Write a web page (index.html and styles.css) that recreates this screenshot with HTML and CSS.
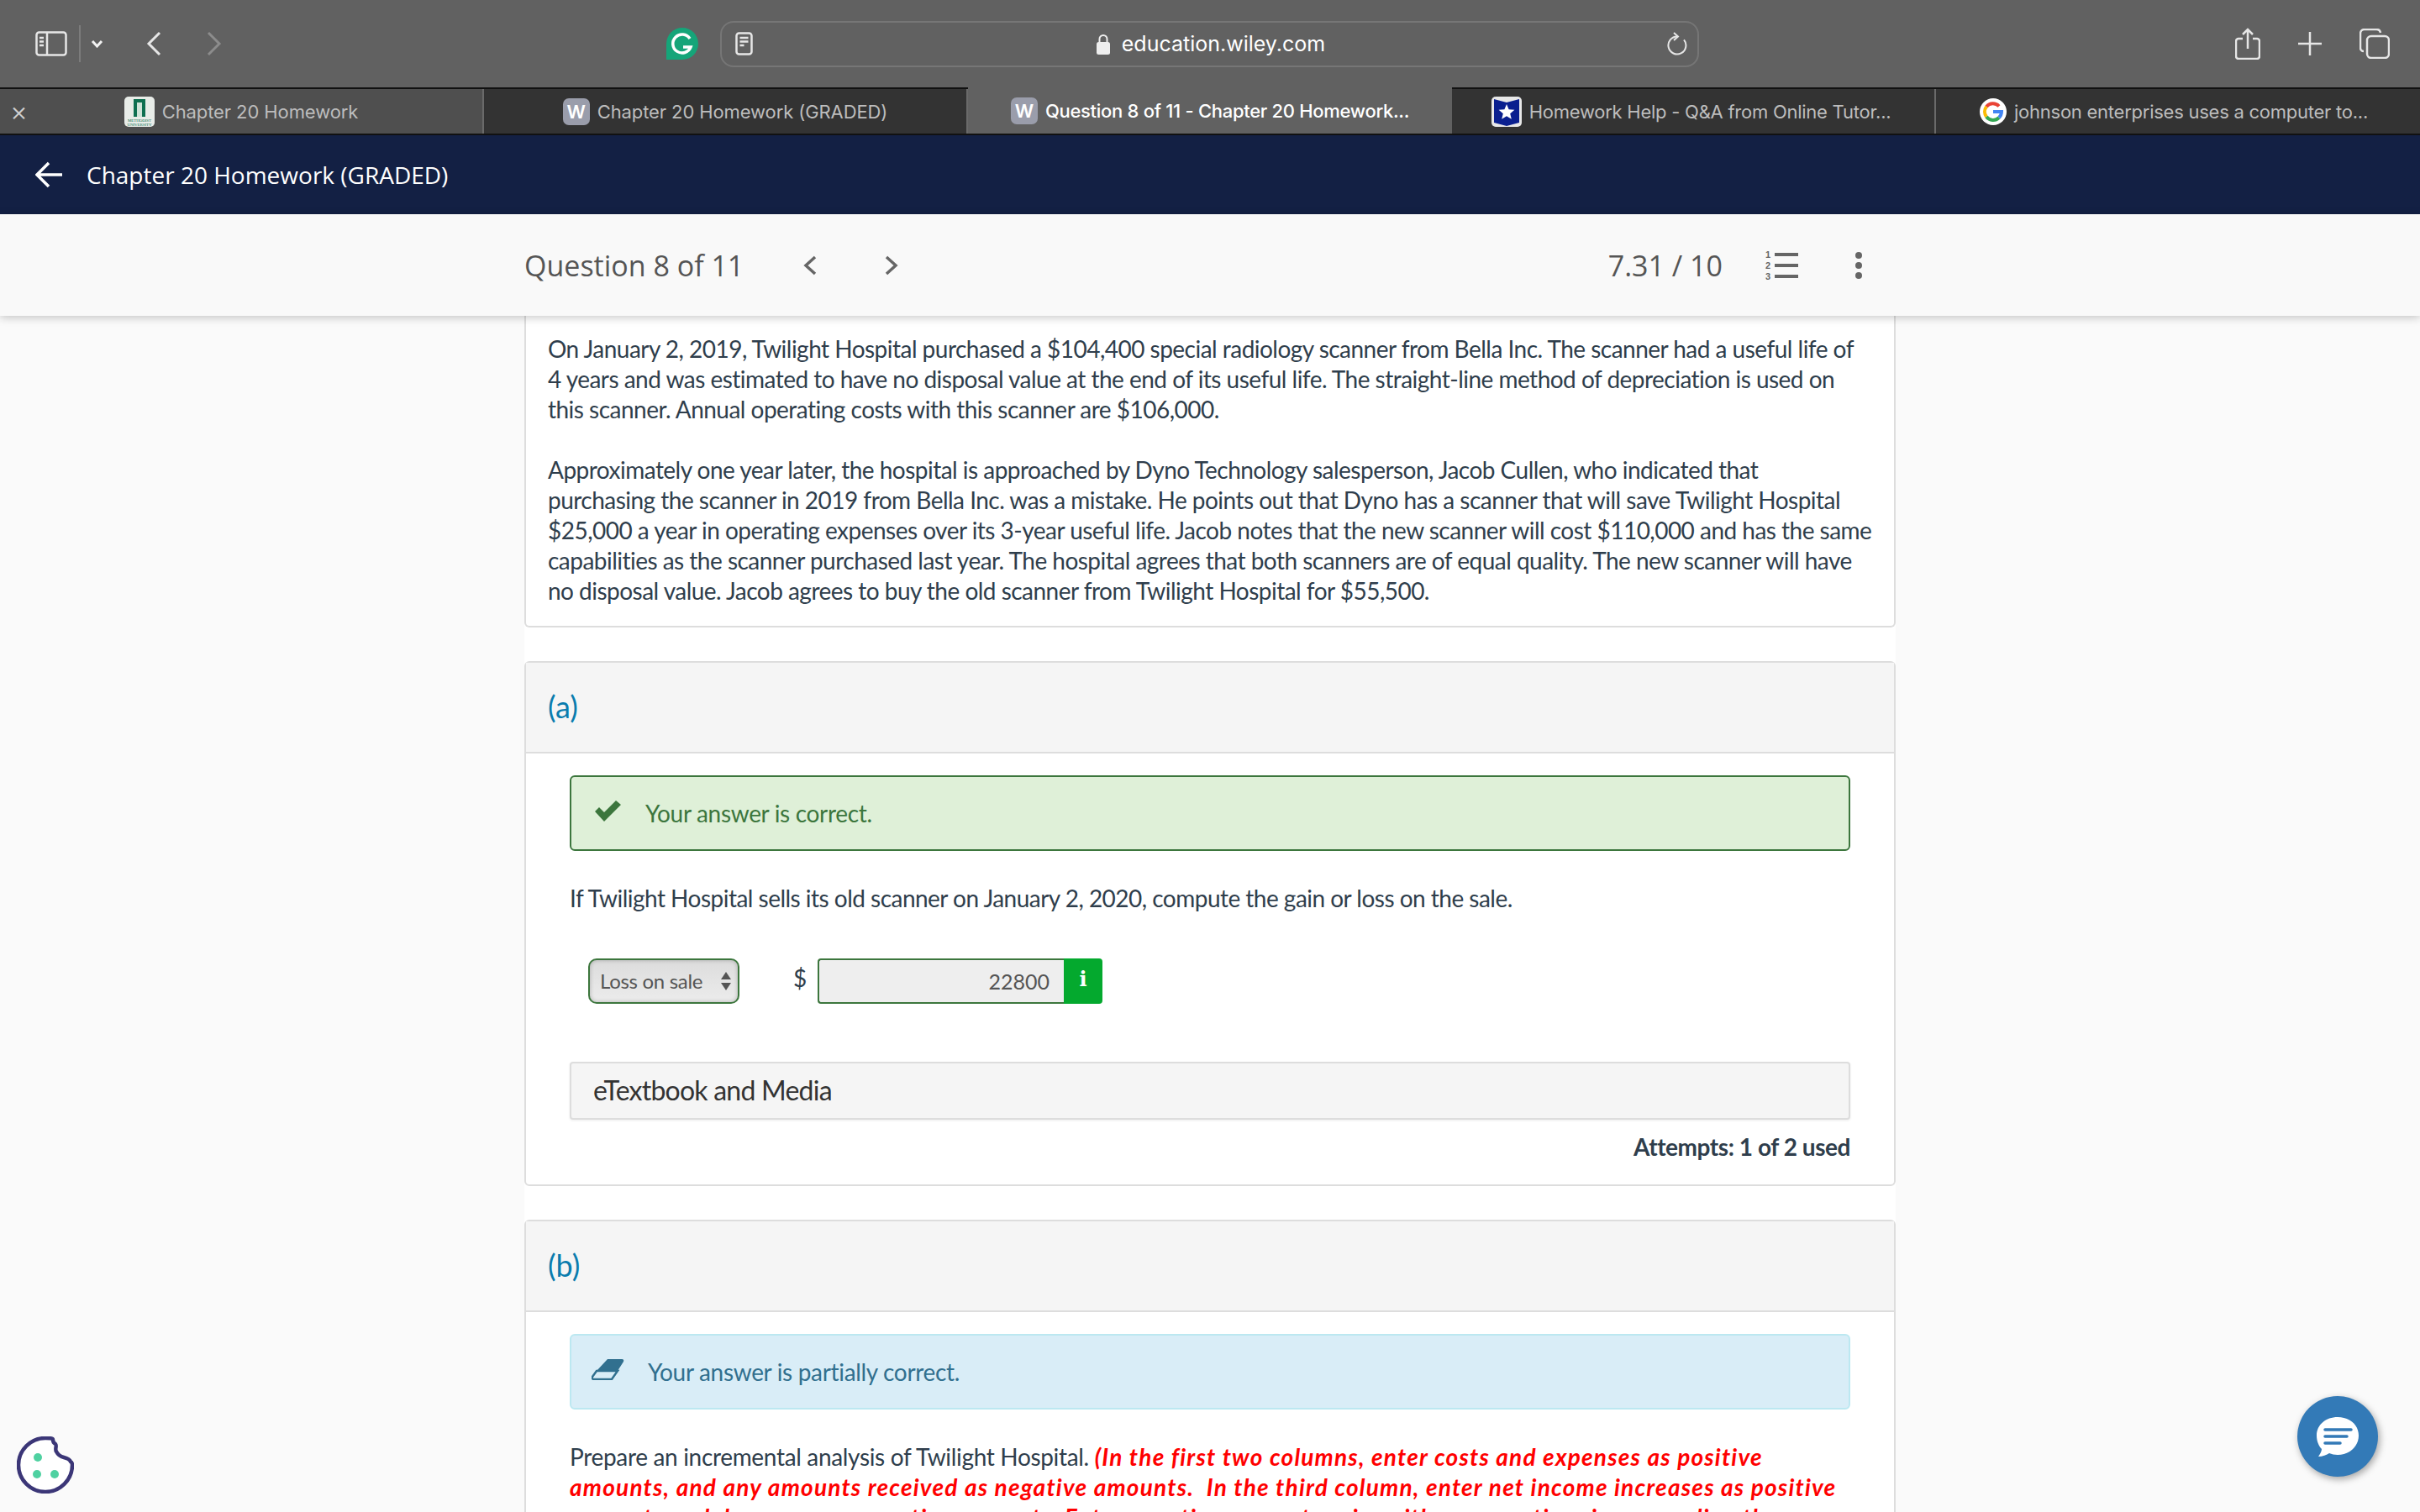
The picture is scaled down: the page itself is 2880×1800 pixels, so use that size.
FILE: index.html
```html
<!DOCTYPE html>
<html lang="en">
<head>
    <meta charset="UTF-8">
    <title>Question 8 of 11 - Chapter 20 Homework (GRADED)</title>
    <link rel="stylesheet" href="styles.css">
</head>
<body>
    <!-- browser toolbar -->
    <div class="toolbar">
        <svg class="ic-sidebar" width="38" height="30" viewBox="0 0 38 30" fill="none" stroke="#e6e6e6" stroke-width="2.5"><rect x="1.5" y="1.5" width="35" height="27" rx="3"/><path d="M14 2v26M5 8h5M5 12.500h5M5 17h5" /></svg>
        <span class="tool-sep"></span>
        <svg class="ic-down" width="15" height="10" viewBox="0 0 15 10" fill="none" stroke="#f2f2f2" stroke-width="3"><path d="M2 2l5.500 6L13 2"/></svg>
        <svg class="ic-back" width="18" height="30" viewBox="0 0 18 30" fill="none" stroke="#e6e6e6" stroke-width="3"><path d="M16 2L3 15l13 13"/></svg>
        <svg class="ic-forward" width="18" height="30" viewBox="0 0 18 30" fill="none" stroke="#8c8c8c" stroke-width="3"><path d="M2 2l13 13L2 28"/></svg>
        <svg class="ic-grammarly" width="38" height="38" viewBox="0 0 38 38"><path d="M19 0a19 19 0 0 1 0 38H0V19A19 19 0 0 1 19 0z" fill="#15a579"/><path d="M28 13a11 11 0 1 0 1 10h-9" fill="none" stroke="#fff" stroke-width="3.500"/></svg>
        <div class="urlbar">
            <svg width="21" height="28" viewBox="0 0 21 28" fill="none" stroke="#e6e6e6" stroke-width="2.500"><rect x="1.500" y="1.500" width="18" height="25" rx="3"/><path d="M5.500 7h10M5.500 11.500h10M5.500 16h5"/></svg>
            <div class="url-host">
                <svg width="16" height="25" viewBox="0 0 16 25"><path d="M3.500 11V6.500a4.500 4.500 0 0 1 9 0V11" fill="none" stroke="#eee" stroke-width="2"/><rect y="10" width="16" height="15" rx="2.500" fill="#eee"/></svg>
                <span>education.wiley.com</span>
            </div>
            <svg width="24" height="28" viewBox="0 0 24 28" fill="none" stroke="#e6e6e6" stroke-width="2"><path d="M20 9.300A10.500 10.500 0 1 1 12 5.500"/><path d="M8 1l5 4.500L8 10"/></svg>
        </div>
        <div class="tool-right">
            <svg width="30" height="38" viewBox="0 0 30 38" fill="none" stroke="#e6e6e6" stroke-width="2.500"><path d="M9 13H4a3 3 0 0 0-3 3v18a3 3 0 0 0 3 3h22a3 3 0 0 0 3-3V16a3 3 0 0 0-3-3h-5M15 25V2M9 8l6-6 6 6"/></svg>
            <svg width="28" height="28" viewBox="0 0 28 28" fill="none" stroke="#e6e6e6" stroke-width="2.500"><path d="M14 0v28M0 14h28"/></svg>
            <svg width="36" height="36" viewBox="0 0 36 36" fill="none" stroke="#e6e6e6" stroke-width="2.500"><rect x="9" y="9" width="26" height="26" rx="5"/><path d="M5 27a4 4 0 0 1-4-4V6a5 5 0 0 1 5-5h14a5 5 0 0 1 5 4"/></svg>
        </div>
    </div>

    <!-- tabs -->
    <div class="tabbar">
        <div class="tab tab-hover">
            <span class="tab-close">&times;</span>
            <svg class="favicon" width="36" height="36" viewBox="0 0 36 36"><rect width="36" height="36" rx="5" fill="#e8ece8"/><rect x="11" y="3" width="14" height="21" fill="#0e6f50"/><rect x="15" y="7" width="6" height="17" fill="#cfe3d8"/><text x="18" y="30" class="fav-small" fill="#0e6f50">METHODIST</text><text x="18" y="35" class="fav-small" fill="#0e6f50">UNIVERSITY</text></svg>
            <span class="tab-title">Chapter 20 Homework</span>
        </div>
        <div class="tab">
            <span class="fav-w">W</span>
            <span class="tab-title">Chapter 20 Homework (GRADED)</span>
        </div>
        <div class="tab tab-active">
            <span class="fav-w">W</span>
            <span class="tab-title">Question 8 of 11 - Chapter 20 Homework...</span>
        </div>
        <div class="tab tab-tight">
            <svg class="favicon" width="36" height="36" viewBox="0 0 36 36"><rect width="36" height="36" rx="5" fill="#e8e8e8"/><path d="M3 3l15 4 15-4v28l-15 4-15-4z" fill="#0a1f8f"/><path d="M18 9l2.600 6.300 6.800.5-5.200 4.400 1.600 6.600-5.800-3.600-5.800 3.600 1.600-6.600-5.200-4.400 6.800-.5z" fill="#fff"/></svg>
            <span class="tab-title">Homework Help - Q&amp;A from Online Tutor...</span>
        </div>
        <div class="tab tab-tight tab-last">
            <svg class="favicon" width="32" height="32" viewBox="0 0 32 32"><circle cx="16" cy="16" r="16" fill="#fff"/><g fill="none" stroke-width="4"><path d="M23 9.500A10 10 0 0 0 8 10" stroke="#ea4335"/><path d="M8 10a10 10 0 0 0 0 12" stroke="#fbbc05"/><path d="M8 22a10 10 0 0 0 15 1" stroke="#34a853"/><path d="M23 23a10 10 0 0 0 3-7H16" stroke="#4285f4"/></g></svg>
            <span class="tab-title">johnson enterprises uses a computer to...</span>
        </div>
    </div>

    <!-- app header -->
    <div class="app-nav">
        <svg width="32" height="32" viewBox="0 0 32 32" fill="none" stroke="#fff" stroke-width="3.500"><path d="M16 2L2 16l14 14M2 16h30"/></svg>
        <span>Chapter 20 Homework (GRADED)</span>
    </div>

    <div class="question-bar">
        <div class="question-nav">
            <span class="question-title">Question 8 of 11</span>
            <svg class="q-prev" width="16" height="24" viewBox="0 0 16 24" fill="none" stroke="#666" stroke-width="3.500"><path d="M14 2L3 12l11 10"/></svg>
            <svg class="q-next" width="16" height="24" viewBox="0 0 16 24" fill="none" stroke="#666" stroke-width="3.500"><path d="M2 2l11 10L2 22"/></svg>
        </div>
        <div class="question-score">
            <span>7.31 / 10</span>
            <div class="list-icon">
                <div class="list-row"><b>1</b><i></i></div>
                <div class="list-row"><b>2</b><i></i></div>
                <div class="list-row"><b>3</b><i></i></div>
            </div>
            <div class="dots"><i></i><i></i><i></i></div>
        </div>
    </div>

    <div class="column">
        <div class="card card-intro">
            <p>On January 2, 2019, Twilight Hospital purchased a $104,400 special radiology scanner from Bella Inc. The scanner had a useful life of<br>4 years and was estimated to have no disposal value at the end of its useful life. The straight-line method of depreciation is used on<br>this scanner. Annual operating costs with this scanner are $106,000.</p>
            <p>Approximately one year later, the hospital is approached by Dyno Technology salesperson, Jacob Cullen, who indicated that<br>purchasing the scanner in 2019 from Bella Inc. was a mistake. He points out that Dyno has a scanner that will save Twilight Hospital<br>$25,000 a year in operating expenses over its 3-year useful life. Jacob notes that the new scanner will cost $110,000 and has the same<br>capabilities as the scanner purchased last year. The hospital agrees that both scanners are of equal quality. The new scanner will have<br>no disposal value. Jacob agrees to buy the old scanner from Twilight Hospital for $55,500.</p>
        </div>

        <div class="card">
            <div class="card-head">(a)</div>
            <div class="card-body">
                <div class="alert alert-ok">
                    <svg width="32" height="25" viewBox="0 0 32 25"><path d="M1 13l5-5 6 6L26 0l6 5-20 20z" fill="#3c763d"/></svg>
                    <span>Your answer is correct.</span>
                </div>
                <p class="prompt prompt-a">If Twilight Hospital sells its old scanner on January 2, 2020, compute the gain or loss on the sale.</p>
                <div class="answer-row">
                    <div class="fake-select">
                        <span>Loss on sale</span>
                        <div class="updown"><i class="up"></i><i class="down"></i></div>
                    </div>
                    <span class="dollar">$</span>
                    <div class="answer-input">22800</div>
                    <div class="answer-info">i</div>
                </div>
                <div class="etext">eTextbook and Media</div>
                <div class="attempts">Attempts: 1 of 2 used</div>
            </div>
        </div>

        <div class="card">
            <div class="card-head">(b)</div>
            <div class="card-body">
                <div class="alert alert-part">
                    <svg width="40" height="26" viewBox="0 0 40 26"><path d="M19 1h17a2 2 0 0 1 2 3L31 15H6z" fill="#31708f"/><path d="M6 15h25l-7 10H3a2 2 0 0 1-2-3z" fill="none" stroke="#31708f" stroke-width="2.500"/></svg>
                    <span>Your answer is partially correct.</span>
                </div>
                <p class="prompt prompt-b">Prepare an incremental analysis of Twilight Hospital. <em class="hint">(In the first two columns, enter costs and expenses as positive<br>amounts, and any amounts received as negative amounts.&nbsp; In the third column, enter net income increases as positive<br>amounts and decreases as negative amounts. Enter negative amounts using either a negative sign preceding the</em></p>
            </div>
        </div>
    </div>

    <!-- floating widgets -->
    <svg class="cookie" width="68" height="68" viewBox="0 0 68 68"><path d="M34 2c5 0 9 0 9 2s1 4 3 5c2 2-1 6 1 9 2 4 5 6 9 7 4 1 7 2 8 5 2 1 2 2 2 4a32 32 0 1 1-32-32z" fill="#fff" stroke="#3b3677" stroke-width="4.500"/><circle cx="25" cy="25" r="5" fill="#4fd1a1"/><circle cx="24" cy="45" r="5" fill="#4fd1a1"/><circle cx="45" cy="45" r="5" fill="#4fd1a1"/></svg>
    <div class="chat-btn">
        <svg width="52" height="48" viewBox="0 0 52 48"><path d="M26 1c14 0 25 9 25 22S40 46 26 46c-4 0-7-1-10-2-3 2-8 4-13 4 2-3 4-6 4-9C3 35 1 29 1 23 1 10 12 1 26 1z" fill="#fff"/><path d="M11 16h31M11 24h26M11 32h18" stroke="#337ab7" stroke-width="3.500" stroke-linecap="round"/></svg>
    </div>
</body>
</html>
```

FILE: styles.css
```css
html, body {
    margin: 0;
    padding: 0;
}
body {
    position: relative;
    width: 2880px;
    height: 1800px;
    overflow: hidden;
    background: #fafafa;
    font-family: 'Lato', sans-serif;
    color: #2f3e4c;
}
p {
    margin: 0;
}

/* toolbar */
.toolbar {
    height: 104px;
    background: #616161;
    display: flex;
    align-items: center;
    padding-left: 42px;
    box-sizing: border-box;
    font-family: 'Inter', sans-serif;
}
.tool-sep {
    width: 2px;
    height: 44px;
    background: #7c7c7c;
    margin-left: 14px;
}
.ic-down {
    margin-left: 12px;
}
.ic-back {
    margin-left: 51px;
}
.ic-forward {
    margin-left: 54px;
}
.ic-grammarly {
    margin-left: 529px;
    margin-top: 0;
}
.urlbar {
    width: 1165px;
    height: 55px;
    margin-left: 26px;
    border: 2px solid #767676;
    border-radius: 16px;
    box-sizing: border-box;
    display: flex;
    align-items: center;
    justify-content: space-between;
    padding: 0 12px 0 16px;
    flex-shrink: 0;
}
.url-host {
    display: flex;
    align-items: center;
    gap: 14px;
    color: #fff;
    font-size: 25px;
    margin-left: 2px;
}
.tool-right {
    display: flex;
    align-items: center;
    gap: 45px;
    margin-left: 638px;
}

/* tabs */
.tabbar {
    height: 57px;
    display: flex;
    background: #333;
    border-top: 2px solid #111;
    border-bottom: 2px solid #111;
    box-sizing: border-box;
    font-family: 'Inter', sans-serif;
}
.tab {
    position: relative;
    width: 576px;
    box-sizing: border-box;
    display: flex;
    align-items: center;
    justify-content: center;
    gap: 9px;
    font-size: 22px;
    letter-spacing: -0.1px;
    color: #bdbdbd;
    border-right: 2px solid #6a6a6a;
}
.tab:last-child {
    border-right: none;
}
.tab-tight {
    letter-spacing: -0.25px;
    padding-right: 5px;
}
.tab-last {
    padding-right: 10px;
}
.tab-hover {
    background: #4f4f4f;
}
.tab-active {
    background: #616161;
    color: #fff;
    font-weight: 500;
    letter-spacing: -0.3px;
    border-right: none;
    margin-top: -2px;
    height: 55px;
}
.tab-close {
    position: absolute;
    left: 12px;
    font-size: 32px;
    font-weight: 300;
    color: #cfcfcf;
}
.favicon {
    flex-shrink: 0;
}
.fav-small {
    font-family: 'Liberation Serif', serif;
    font-size: 5px;
    text-anchor: middle;
}
.fav-w {
    width: 32px;
    height: 32px;
    border-radius: 7px;
    background: #9a9dab;
    color: #fff;
    font-size: 22px;
    font-weight: 600;
    display: flex;
    align-items: center;
    justify-content: center;
    flex-shrink: 0;
}

/* app header */
.app-nav {
    height: 94px;
    background: #132044;
    display: flex;
    align-items: center;
    gap: 29px;
    padding-left: 42px;
    font-family: 'Open Sans', sans-serif;
    font-size: 28px;
    color: #fff;
}
.question-bar {
    position: relative;
    z-index: 2;
    height: 121px;
    background: #f9f9f9;
    box-shadow: 0 2px 10px rgba(0, 0, 0, 0.22);
    display: flex;
    align-items: center;
    justify-content: space-between;
    padding: 0 664px 0 624px;
    box-sizing: border-box;
    font-family: 'Open Sans', sans-serif;
    font-size: 34px;
    color: #555;
}
.question-nav {
    display: flex;
    align-items: center;
}
.q-prev {
    margin-left: 71px;
}
.q-next {
    margin-left: 81px;
}
.question-score {
    display: flex;
    align-items: center;
}
.list-icon {
    margin-left: 51px;
    display: flex;
    flex-direction: column;
    gap: 3px;
}
.list-row {
    display: flex;
    align-items: center;
    gap: 3px;
    height: 10px;
}
.list-row b {
    font-family: 'Liberation Sans', sans-serif;
    font-size: 11px;
    width: 8px;
    color: #666;
}
.list-row i {
    display: block;
    width: 28px;
    height: 4px;
    background: #666;
}
.dots {
    margin-left: 68px;
    display: flex;
    flex-direction: column;
    gap: 4px;
}
.dots i {
    display: block;
    width: 8px;
    height: 8px;
    border-radius: 50%;
    background: #666;
}

/* content */
.column {
    width: 1632px;
    margin-left: 624px;
    background: #fff;
    display: flex;
    flex-direction: column;
    gap: 40px;
    font-size: 28px;
    line-height: 36px;
    letter-spacing: -0.52px;
}
.card {
    border: 2px solid #ddd;
    border-radius: 6px;
    box-sizing: border-box;
    background: #fff;
}
.card-intro {
    border-top: none;
    border-radius: 0 0 6px 6px;
    padding: 21px 26px 24px;
    height: 371px;
}
.card-intro p + p {
    margin-top: 36px;
}
.card-head {
    height: 108px;
    background: #f5f5f5;
    border-bottom: 2px solid #ddd;
    padding: 0 0 3px 26px;
    display: flex;
    align-items: center;
    font-size: 36px;
    letter-spacing: 0;
    color: #0a7cae;
    box-sizing: border-box;
}
.card-body {
    padding: 26px 52px 0;
}
.alert {
    height: 90px;
    border: 2px solid;
    border-radius: 6px;
    box-sizing: border-box;
    display: flex;
    align-items: center;
    letter-spacing: -0.33px;
}
.alert-ok {
    background: #dff0d8;
    border-color: #3c763d;
    color: #3c763d;
    padding-left: 27px;
    gap: 29px;
}
.alert-ok svg {
    margin-top: -6px;
}
.alert-part {
    background: #d9edf7;
    border-color: #bce8f1;
    color: #31708f;
    padding-left: 24px;
    gap: 27px;
}
.alert-part svg {
    margin-top: -6px;
}
.prompt-a {
    margin-top: 38px;
}
.prompt-b {
    margin-top: 38px;
    letter-spacing: -0.33px;
}
.hint {
    color: #f00;
    font-weight: 700;
    letter-spacing: 1.2px;
}
.answer-row {
    display: flex;
    align-items: center;
    margin: 54px 0 0 22px;
    height: 54px;
    color: #555;
    font-size: 25px;
    letter-spacing: 0;
}
.fake-select {
    width: 180px;
    height: 54px;
    box-sizing: border-box;
    border: 2px solid #3c763d;
    border-radius: 10px;
    background: linear-gradient(#dcdcdc, #ececec);
    box-shadow: inset 0 0 5px rgba(0, 0, 0, 0.25);
    display: flex;
    align-items: center;
    justify-content: space-between;
    padding: 0 8px 0 12px;
    font-size: 24px;
    letter-spacing: -0.3px;
}
.updown {
    display: flex;
    flex-direction: column;
    gap: 4px;
}
.updown i {
    display: block;
    border-left: 6px solid transparent;
    border-right: 6px solid transparent;
}
.updown .up {
    border-bottom: 9px solid #555;
}
.updown .down {
    border-top: 9px solid #555;
}
.dollar {
    margin-left: 64px;
    width: 29px;
    font-size: 28px;
    color: #2f3e4c;
    position: relative;
    top: -4px;
}
.answer-input {
    width: 293px;
    height: 54px;
    box-sizing: border-box;
    border: 2px solid #3c763d;
    border-right: none;
    border-radius: 4px 0 0 4px;
    background: #eee;
    text-align: right;
    padding-right: 17px;
    line-height: 50px;
}
.answer-info {
    width: 46px;
    height: 54px;
    background: #04a92e;
    border-radius: 0 4px 4px 0;
    color: #fff;
    font-family: 'DejaVu Serif', serif;
    font-weight: 700;
    font-size: 24px;
    text-align: center;
    line-height: 50px;
}
.etext {
    margin-top: 69px;
    height: 69px;
    box-sizing: border-box;
    background: #f5f5f5;
    border: 2px solid #ddd;
    border-radius: 4px;
    box-shadow: 0 1px 3px rgba(0, 0, 0, 0.08);
    padding-left: 26px;
    font-size: 32px;
    letter-spacing: -0.77px;
    line-height: 64px;
    color: #333;
}
.attempts {
    text-align: right;
    font-weight: 700;
    letter-spacing: -0.44px;
    margin-top: 14px;
    height: 63px;
}

/* floating */
.cookie {
    position: absolute;
    left: 20px;
    bottom: 22px;
}
.chat-btn {
    position: absolute;
    left: 2734px;
    top: 1662px;
    width: 96px;
    height: 96px;
    border-radius: 50%;
    background: #337ab7;
    box-shadow: 2px 3px 8px rgba(0, 0, 0, 0.35);
    display: flex;
    align-items: center;
    justify-content: center;
}
```
